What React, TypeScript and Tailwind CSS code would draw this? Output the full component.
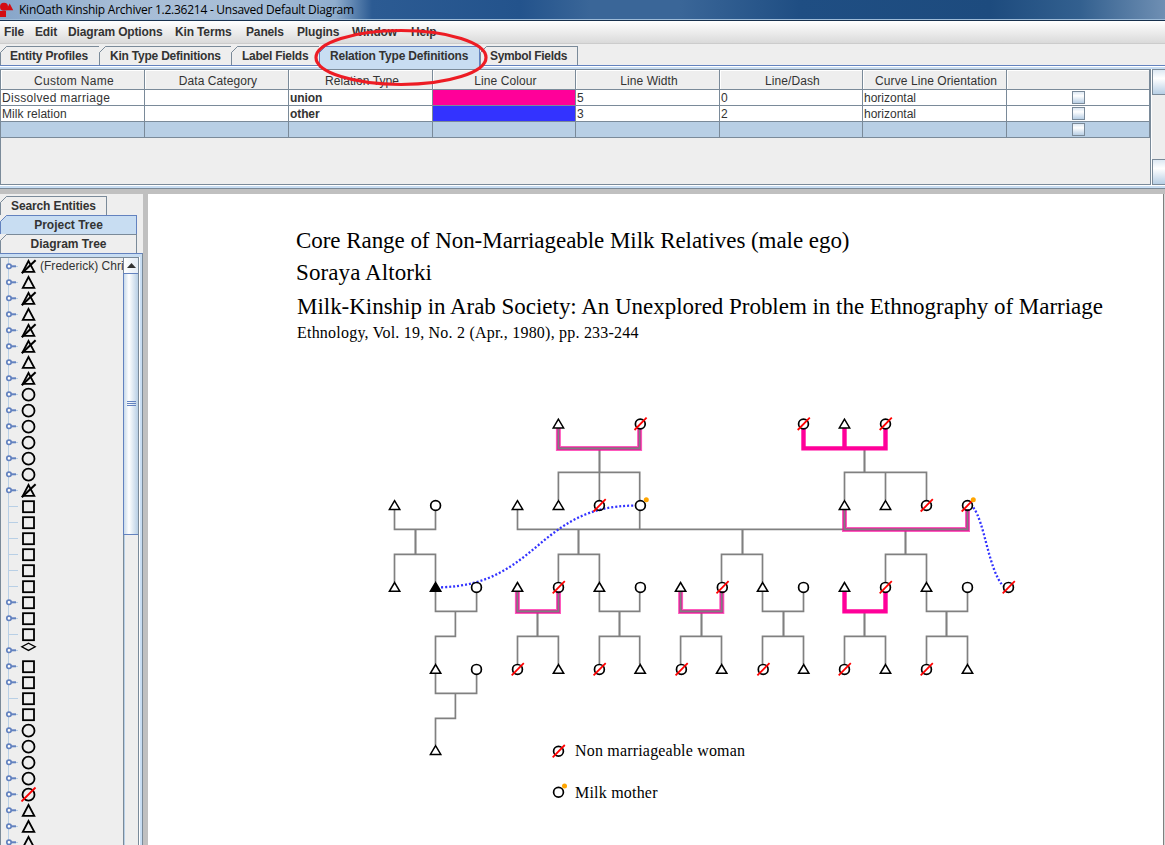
import React from "react";

type Kind = "tri" | "dead" | "fill" | "circ" | "non" | "sq" | "dia";

const menu: [string, string][] = [
  ["File", "w-[31px]"],
  ["Edit", "w-[33px]"],
  ["Diagram Options", "w-[107px]"],
  ["Kin Terms", "w-[71px]"],
  ["Panels", "w-[51px]"],
  ["Plugins", "w-[55px]"],
  ["Window", "w-[59px]"],
  ["Help", "w-[40px]"],
];

function Corner({ bg, line }: { bg: string; line: string }) {
  return (
    <svg className="absolute -left-px -top-px" width="8" height="8">
      <path d="M0 0H7L0 7Z" fill={bg} />
      <path d="M0.5 7.5V6.5L6.5 0.5H8" fill="none" stroke={line} />
    </svg>
  );
}

function Tab({ label, box, active }: { label: string; box: string; active?: boolean }) {
  return (
    <div
      className={`relative shrink-0 border-l border-t font-bold whitespace-nowrap ${box} ${
        active ? "border-[#6382bf] bg-[#c8ddf2] z-10" : "border-[#7a8a99] bg-[#eeeeee]"
      }`}
    >
      <Corner bg="#eeeeee" line={active ? "#6382bf" : "#7a8a99"} />
      {label}
    </div>
  );
}

const headers = [
  "Custom Name",
  "Data Category",
  "Relation Type",
  "Line Colour",
  "Line Width",
  "Line/Dash",
  "Curve Line Orientation",
  "",
];
const rows = [
  ["Dissolved marriage", "", "union", "pink", "5", "0", "horizontal", "check"],
  ["Milk relation", "", "other", "blue", "3", "2", "horizontal", "check"],
  ["", "", "", "", "", "", "", "check"],
];
const cols = "grid grid-cols-[144px_144px_144px_143px_144px_143px_144px_143px]";

function Table() {
  return (
    <div className="h-[116px] w-[1151px] shrink-0 border border-[#7a8a99] bg-[#eeeeee]">
      <div className={`${cols} h-5 grid-rows-[19px] border-b border-[#7a8a99]`}>
        {headers.map((h, i) => (
          <div
            key={i}
            className={`border-r border-[#7a8a99] pl-[3px] text-center leading-[22px] shadow-[inset_1px_1px_0_#fff] ${
              i === 0 ? "tracking-[0.3px]" : "tracking-[0.08px]"
            }`}
          >
            {h}
          </div>
        ))}
      </div>
      {rows.map((r, ri) => (
        <div
          key={ri}
          className={`${cols} h-4 grid-rows-[15px] border-b border-[#7a8a99] ${ri === 2 ? "bg-[#b8cfe5]" : "bg-white"}`}
        >
          {r.map((c, ci) => (
            <div
              key={ci}
              className={`border-r border-[#7a8a99] pl-px leading-[16px] ${
                ci === 2 ? "font-bold tracking-[-0.1px]" : ""
              } ${c === "pink" ? "bg-[#ff0099]" : c === "blue" ? "bg-[#3333ff]" : ""} ${
                ci === 7 ? "flex justify-center pt-px" : ""
              } ${ci === 0 ? (ri === 0 ? "tracking-[0.3px]" : "tracking-[0.05px]") : ""}`}
            >
              {c === "check" ? (
                <span className="h-[13px] w-[13px] border border-[#7a8a99] bg-linear-to-b from-[#dde8f3] via-white via-35% to-[#b8cfe5]" />
              ) : c === "pink" || c === "blue" ? null : (
                c
              )}
            </div>
          ))}
        </div>
      ))}
    </div>
  );
}

const tree: [Kind, boolean][] = [
  ["dead", true], ["tri", true], ["dead", true], ["tri", true], ["dead", true], ["dead", true],
  ["tri", true], ["dead", true], ["circ", true], ["circ", true], ["circ", true], ["circ", true],
  ["circ", true], ["circ", true], ["dead", true], ["sq", false], ["sq", false], ["sq", false],
  ["sq", false], ["sq", false], ["sq", false], ["sq", true], ["sq", true], ["sq", false],
  ["dia", true], ["sq", true], ["sq", true], ["sq", false], ["sq", true], ["circ", true],
  ["circ", true], ["circ", true], ["circ", true], ["non", true], ["tri", true], ["tri", true],
  ["tri", true],
];

function TreeIcon({ kind, handle }: { kind: Kind; handle: boolean }) {
  return (
    <svg width="38" height="16" viewBox="0 0 38 16" className="shrink-0" fill="none">
      <path d="M7.5 0V16M8 8.5H17" stroke="#b8cfe5" />
      {handle && (
        <>
          <path d="M9 8.3H15" stroke="#6382bf" strokeWidth="2" />
          <circle cx="8" cy="8.3" r="2.2" fill="#fff" stroke="#6382bf" strokeWidth="1.7" />
        </>
      )}
      {(kind === "tri" || kind === "dead") && (
        <path d="M27.5 3L21.8 13.8H33.3Z" stroke="#000" strokeWidth="1.8" />
      )}
      {kind === "dead" && <path d="M20.8 15.3L34.6 2.2" stroke="#000" strokeWidth="2" />}
      {(kind === "circ" || kind === "non") && (
        <circle cx="27.5" cy="8.7" r="6" stroke="#000" strokeWidth="1.8" />
      )}
      {kind === "non" && <path d="M20.5 15.5L34.5 1.5" stroke="#f00" strokeWidth="1.8" />}
      {kind === "sq" && <rect x="22" y="3.2" width="11" height="11" stroke="#000" strokeWidth="1.8" />}
      {kind === "dia" && <path d="M20.8 4.8L27.5 1.2L34.2 4.8L27.5 8.4Z" stroke="#000" strokeWidth="1.3" />}
    </svg>
  );
}

function Sidebar() {
  return (
    <div className="flex h-full w-[143px] shrink-0 flex-col bg-[#eeeeee] pt-[2px]">
      <Tab label="Search Entities" box="w-[107px] h-[19px] border-r pl-2.5 leading-[19px] tracking-[-0.12px]" />
      <Tab label="Project Tree" active box="w-[137px] h-[19px] border-r text-center leading-[18px]" />
      <Tab label="Diagram Tree" box="w-[137px] h-[19px] border-r text-center leading-[18px]" />
      <div className="flex min-h-0 flex-1 flex-col border-r border-t border-r-[#7a8a99] border-t-[#6382bf] bg-[#c8ddf2] pt-[3px] pr-[2px]">
        <div className="flex min-h-0 flex-1 border-r border-white">
          <div className="flex min-w-0 flex-1 border-x border-t border-[#7a8a99] bg-[#eeeeee]">
            <div className="flex h-[587px] w-[122px] flex-col overflow-hidden">
              {tree.map(([k, h], i) => (
                <div key={i} className="flex h-4 shrink-0 whitespace-nowrap leading-[17px]">
                  <TreeIcon kind={k} handle={h} />
                  {i === 0 && <span className="pl-px tracking-[0.02px]">(Frederick) Chri</span>}
                </div>
              ))}
            </div>
            <div className="flex flex-1 flex-col border-l border-[#7a8a99] shadow-[inset_1px_0_0_#b8cfe5]">
              <div className="flex h-[15px] justify-center bg-linear-to-r from-white to-[#e4ecf5] pt-[5px]">
                <svg width="9" height="5">
                  <path d="M0 5L4.5 0L9 5Z" fill="#333" />
                </svg>
              </div>
              <div className="flex h-[262px] items-center justify-center border-y border-l -ml-px border-[#6382bf] bg-linear-to-r from-[#c9daeb] via-white via-35% to-[#b8cfe5]">
                <svg width="9" height="6">
                  <path d="M0 .5H9M0 2.5H9M0 4.5H9" stroke="#6382bf" />
                </svg>
              </div>
            </div>
          </div>
        </div>
      </div>
    </div>
  );
}

const nodes: [Kind, number, number][] = [
  ["tri", 558.4, 424], ["non", 640.3, 424], ["non", 803.5, 424], ["tri", 844.5, 424], ["non", 885.5, 424],
  ["tri", 394.6, 505.5], ["circ", 435.6, 505.5], ["tri", 517.5, 505.5], ["tri", 558.5, 505.5],
  ["non", 599.4, 505.5], ["circ", 640.4, 505.5], ["tri", 844.5, 505.5], ["tri", 885.5, 505.5],
  ["non", 926.5, 505.5], ["non", 967.5, 505.5],
  ["tri", 394.6, 587.4], ["fill", 435.6, 587.4], ["circ", 476.5, 587.4], ["tri", 517.5, 587.4],
  ["non", 558.5, 587.4], ["tri", 599.4, 587.4], ["circ", 640.4, 587.4], ["tri", 680.6, 587.4],
  ["non", 722.3, 587.4], ["tri", 762.6, 587.4], ["circ", 803.5, 587.4], ["tri", 844.5, 587.4],
  ["non", 885.5, 587.4], ["tri", 926.5, 587.4], ["circ", 967.5, 587.4], ["non", 1008.5, 587.4],
  ["tri", 435.6, 669.4], ["circ", 476.5, 669.4], ["non", 517.5, 669.4], ["tri", 558.5, 669.4],
  ["non", 599.4, 669.4], ["tri", 640.2, 669.4], ["non", 681.4, 669.4], ["tri", 721.7, 669.4],
  ["non", 763.2, 669.4], ["tri", 803.7, 669.4], ["non", 844.5, 669.4], ["tri", 885.5, 669.4],
  ["non", 926.5, 669.4], ["tri", 967.5, 669.4],
  ["tri", 435.6, 750.5], ["non", 558.5, 751.3], ["circ", 558.5, 792.2],
];

function Node({ kind, x, y }: { kind: Kind; x: number; y: number }) {
  return (
    <g transform={`translate(${x} ${y})`} fill={kind === "fill" ? "#000" : "none"}>
      {(kind === "tri" || kind === "fill") && (
        <path d="M0 -4.9L-5.2 3.9H5.2Z" stroke="#000" strokeWidth="1.5" />
      )}
      {(kind === "circ" || kind === "non") && <circle r="4.9" stroke="#000" strokeWidth="1.7" />}
      {kind === "non" && <path d="M-5.8 6L6.3 -6.3" stroke="#f00" strokeWidth="1.8" />}
    </g>
  );
}

const thin = [
  "M558.4 500V472.4H639.7V500",
  "M599.4 472V500",
  "M844.5 500V472.4H926.5V500M885.5 472V500",
  "M394.5 510V529.4H435.5V510M394.5 582V554.4H435.5V582",
  "M517.5 510V529.4H844.5M639.7 510V529.4",
  "M558.4 582V554.4H599.4V582M721.5 582V554.4H762.5V582M885.5 582V554.4H926.5V582",
  "M435.5 592V611.4H476.6V592M455.4 611V636.4H435.5V664",
  "M435.5 674V693.4H476.6V674M455.4 693V718.4H435.5V745",
  "M599.4 592V611.4H639.7V592M762.5 592V611.4H803.5V592M926.5 592V611.4H967.5V592",
  "M517.5 664V636.4H558.4V664M599.4 664V636.4H639.7V664M680.6 664V636.4H721.5V664",
  "M762.5 664V636.4H803.5V664M844.5 664V636.4H885.5V664M926.5 664V636.4H967.5V664",
];
const thick =
  "M599.5 448V473M864.5 448V473M415.5 529V555M578.5 529V555M742.5 529V555M905.5 529V555M537.5 611V637M619.5 611V637M701.5 611V637M783.5 611V637M864.5 611V637M946.5 611V637";
const mixed = [
  "M558.4 428V448.4H639.6V428",
  "M844.5 509V529.4H967.5V509",
  "M517.4 591V611.4H558.5V591",
  "M680.6 591V611.4H721.8V591",
];

const captions: [string, number, number, number, number][] = [
  ["Core Range of Non-Marriageable Milk Relatives (male ego)", 296, 248, 23, 553.5],
  ["Soraya Altorki", 296, 280, 23, 136],
  ["Milk-Kinship in Arab Society: An Unexplored Problem in the Ethnography of Marriage", 297, 314, 23, 806],
  ["Ethnology, Vol. 19, No. 2 (Apr., 1980), pp. 233-244", 297, 338, 16, 341.5],
  ["Non marriageable woman", 575, 756, 16, 170],
  ["Milk mother", 575, 798, 16, 82.5],
];

function Diagram() {
  return (
    <svg width="1015" height="651" viewBox="148 194 1015 651" fill="none" className="block shrink-0 bg-white">
      {captions.map(([t, x, y, s, w]) => (
        <text key={t} x={x} y={y} fontSize={s} textLength={w} fill="#000" fontFamily="Liberation Serif, serif">
          {t}
        </text>
      ))}
      <path d={thin.join("")} stroke="#808080" strokeWidth="1.7" />
      <path d={thick} stroke="#808080" strokeWidth="2.1" />
      {mixed.map((d) => (
        <g key={d}>
          <path d={d} stroke="#ff0099" strokeOpacity="0.65" strokeWidth="5" />
          <path d={d} stroke="#dd2299" strokeWidth="3" />
          <path d={d} stroke="#808080" strokeWidth="1.6" />
        </g>
      ))}
      <path
        d="M803.5 429V448.4H885.5V429M844.5 428V448.4M844.5 591V611.4H885.5V592"
        stroke="#ff0099"
        strokeWidth="4.4"
      />
      <path
        d="M441 587.3C538 584.5 538 505.7 635 505.6M973.3 507.5C985 523 988 568 1003 586"
        stroke="#3333ff"
        strokeWidth="2.3"
        strokeDasharray="2 2"
      />
      {nodes.map(([k, x, y]) => (
        <Node key={`${x}-${y}`} kind={k} x={x} y={y} />
      ))}
      <circle cx="646.3" cy="499.7" r="2.5" fill="orange" />
      <circle cx="973.3" cy="499.7" r="2.5" fill="orange" />
      <circle cx="564.5" cy="786" r="2.5" fill="orange" />
    </svg>
  );
}

export default function App() {
  return (
    <div className="relative flex h-[845px] w-[1165px] flex-col overflow-hidden bg-[#eeeeee] font-['Liberation_Sans',sans-serif] text-[12px] text-[#333333]">
      <div className="flex h-[21px] shrink-0 items-start border-b border-[#17304d] bg-[linear-gradient(90deg,#86a5c9_0,#a7bdd6_120px,#a9bfd8_250px,#8fadcd_335px,#2c5b93_372px,#23538c_520px,#3a6698_590px,#3a6698_680px,#1f4e83_800px,#1d4b7e_990px,#33608f_1080px,#6f8fb3_1165px)] shadow-[inset_0_-1px_0_#9dbbd8]">
        <svg width="14" height="18" className="shrink-0">
          <path d="M0 11H6V17H0ZM9.7 3.5L13.2 10.2H6Z" fill="#d40d12" />
          <circle cx="4" cy="6.7" r="4" fill="#d40d12" />
        </svg>
        <span className="pl-[5px] font-['Open_Sans','Noto_Sans',sans-serif] text-[12px] leading-[20px] tracking-[-0.25px] whitespace-nowrap text-black">
          KinOath Kinship Archiver 1.2.36214 - Unsaved Default Diagram
        </span>
      </div>
      <div className="flex h-[23px] shrink-0 border-b border-[#cccccc] bg-linear-to-b from-white to-[#dadada] pl-1 font-bold leading-[23px] tracking-[-0.15px] whitespace-nowrap">
        {menu.map(([m, w]) => (
          <div key={m} className={w}>
            {m}
          </div>
        ))}
      </div>
      <div className="flex h-[22px] shrink-0 items-start border-b border-[#6382bf] pt-[2px]">
        <Tab label="Entity Profiles" box="w-[99px] h-[19px] pl-[9px] leading-[19px] tracking-[-0.18px]" />
        <Tab label="Kin Type Definitions" box="w-[132px] h-[19px] pl-[10px] leading-[19px] tracking-[-0.22px]" />
        <Tab label="Label Fields" box="w-[88px] h-[19px] pl-[10px] leading-[19px] tracking-[-0.25px]" />
        <Tab
          label="Relation Type Definitions"
          active
          box="w-[161px] h-[22px] border-r pl-[10px] leading-[19px] tracking-[-0.2px]"
        />
        <Tab label="Symbol Fields" box="w-[98px] h-[19px] border-r pl-[9px] leading-[19px] tracking-[-0.33px]" />
      </div>
      <div className="flex h-[123px] shrink-0 flex-col border-b border-[#7a8a99] bg-[#c8ddf2] pb-[2px]">
        <div className="h-px shrink-0 bg-white" />
        <div className="h-[2px] shrink-0" />
        <div className="flex min-h-0 flex-1 gap-px border-b border-white bg-white">
          <Table />
          <div className="flex flex-1 flex-col justify-between bg-[#eeeeee]">
            <div className="h-[26px] border border-r-0 border-[#7a8a99] bg-linear-to-b from-[#dde8f3] via-white via-35% to-[#b8cfe5]" />
            <div className="h-[26px] border border-r-0 border-[#7a8a99] bg-linear-to-b from-[#dde8f3] via-white via-35% to-[#b8cfe5]" />
          </div>
        </div>
      </div>
      <div className="h-[5px] shrink-0 bg-[#c0c0c0]" />
      <div className="flex min-h-0 flex-1">
        <Sidebar />
        <div className="w-[5px] shrink-0 bg-[#c0c0c0]" />
        <Diagram />
        <div className="flex-1 border-l border-[#7f7f7f] bg-[#d8d8d8]" />
      </div>
      <svg className="absolute left-[310px] top-[25px] z-20" width="182" height="65">
        <ellipse cx="91" cy="32.5" rx="85" ry="27" fill="none" stroke="#ed1c24" strokeWidth="3.2" />
      </svg>
    </div>
  );
}
